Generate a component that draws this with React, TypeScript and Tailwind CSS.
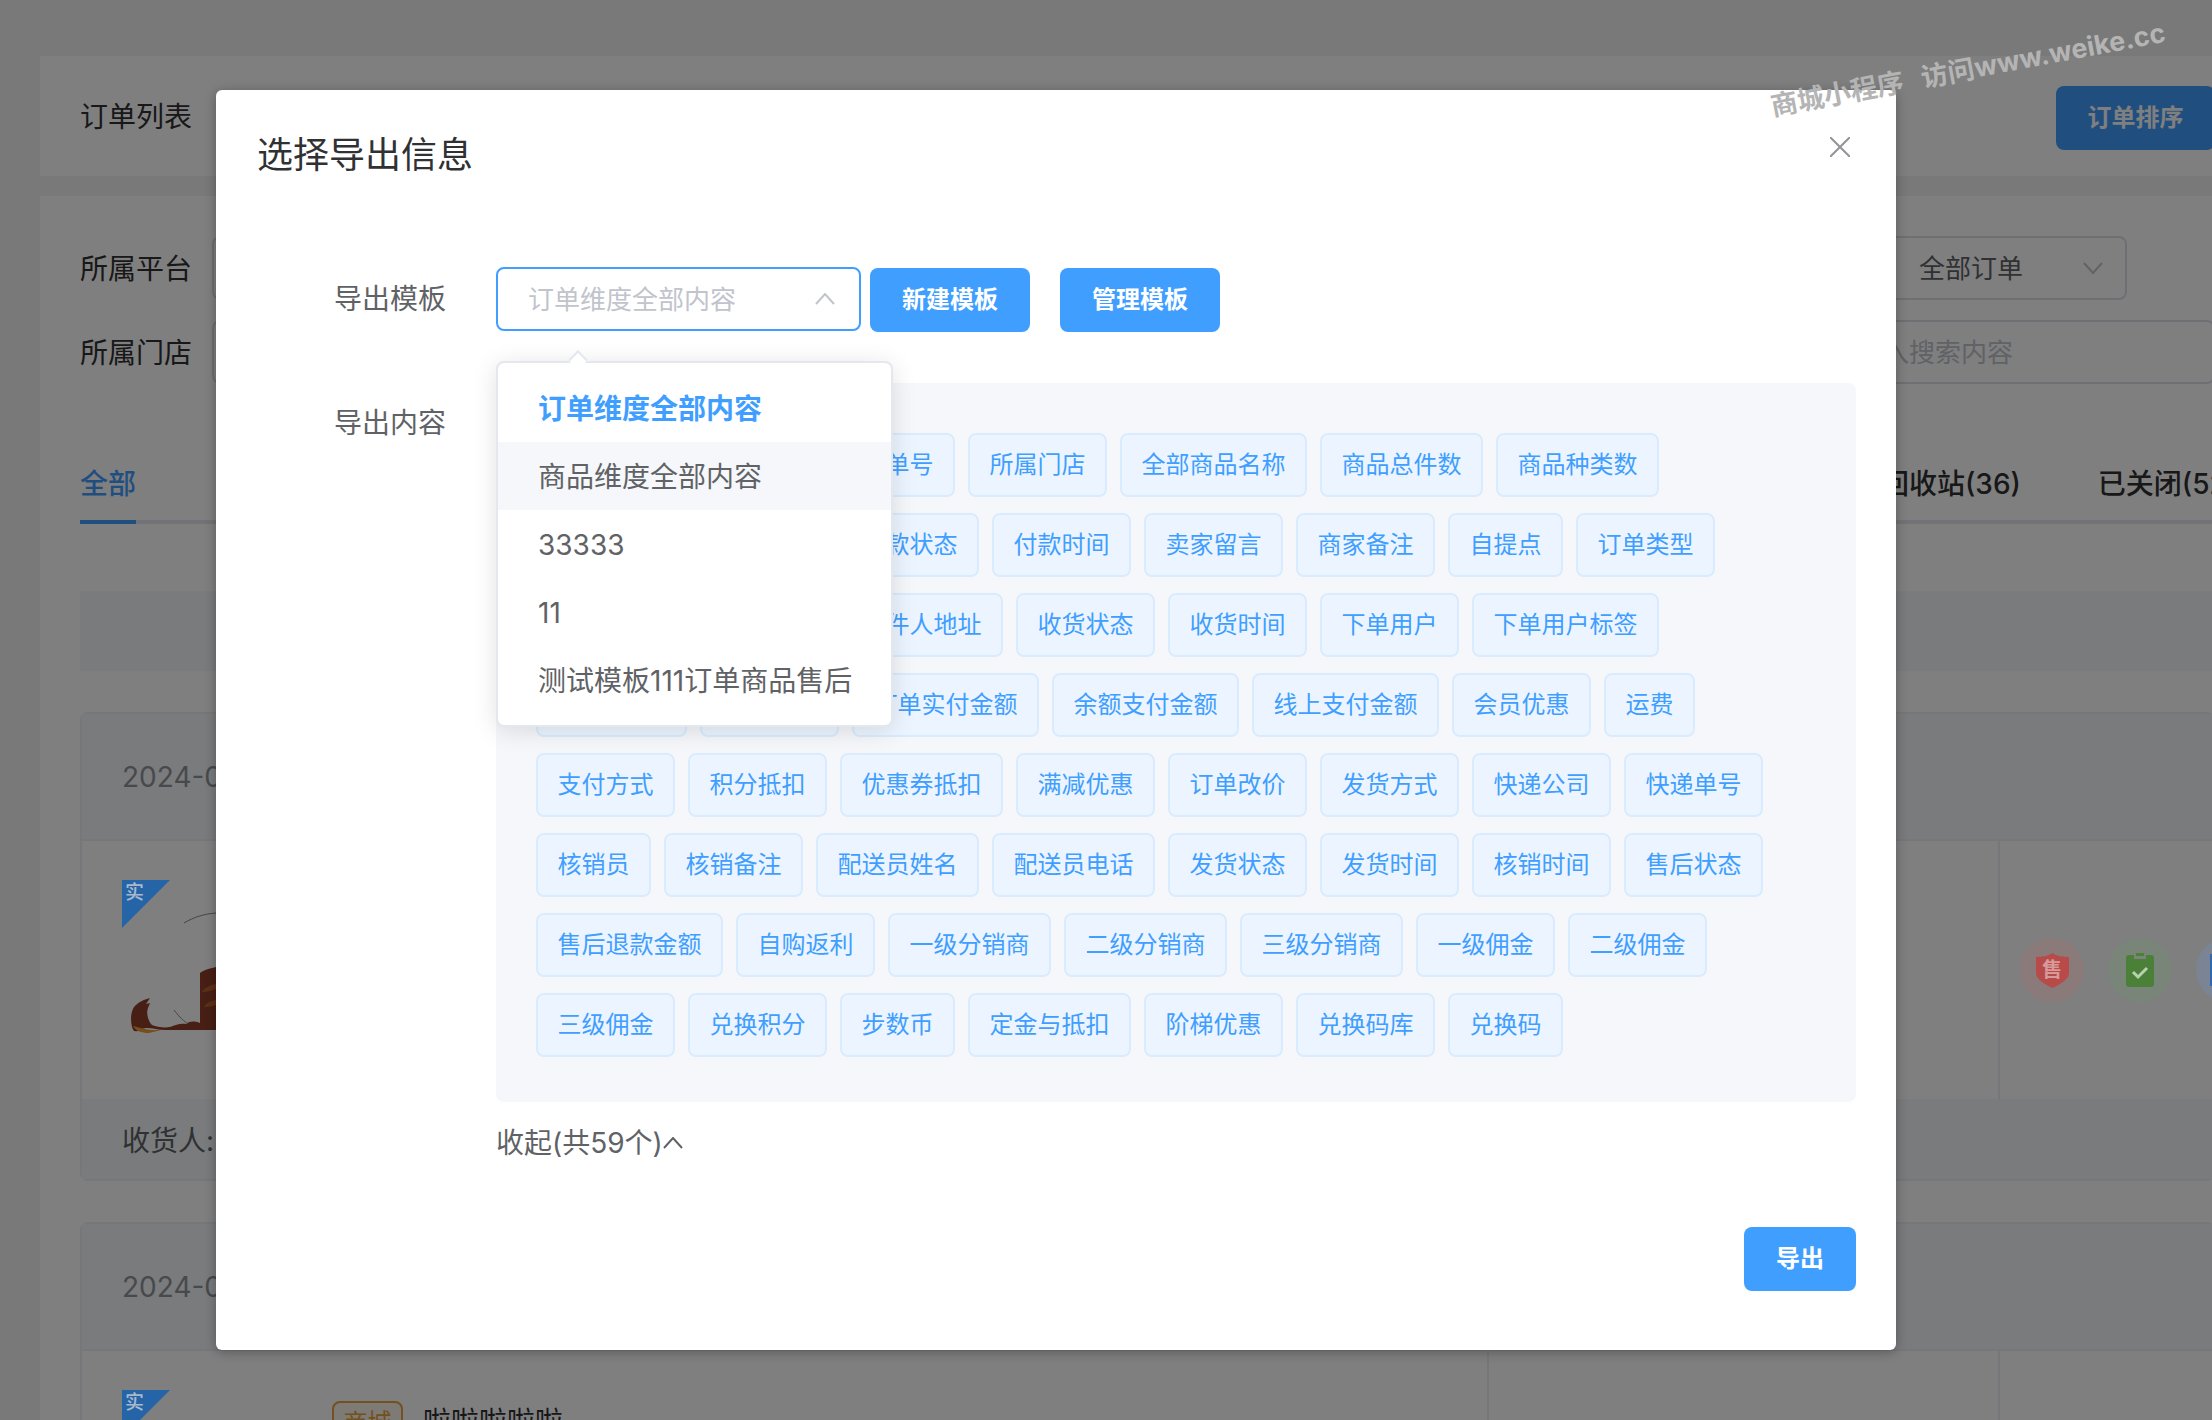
import { ReactNode } from 'react'

const tagRows = [
  ['所属平台', '订单状态', '订单号', '所属门店', '全部商品名称', '商品总件数', '商品种类数'],
  ['下单时间', '付款方式', '付款状态', '付款时间', '卖家留言', '商家备注', '自提点', '订单类型'],
  ['收货人名', '收货电话', '收件人地址', '收货状态', '收货时间', '下单用户', '下单用户标签'],
  ['商品总金额', '订单总额', '订单实付金额', '余额支付金额', '线上支付金额', '会员优惠', '运费'],
  ['支付方式', '积分抵扣', '优惠券抵扣', '满减优惠', '订单改价', '发货方式', '快递公司', '快递单号'],
  ['核销员', '核销备注', '配送员姓名', '配送员电话', '发货状态', '发货时间', '核销时间', '售后状态'],
  ['售后退款金额', '自购返利', '一级分销商', '二级分销商', '三级分销商', '一级佣金', '二级佣金'],
  ['三级佣金', '兑换积分', '步数币', '定金与抵扣', '阶梯优惠', '兑换码库', '兑换码'],
]

const templates = ['商品维度全部内容', '33333', '11', '测试模板111订单商品售后']

function Chevron({ down, color }: { down?: boolean; color: string }) {
  return (
    <svg width="20" height="12" viewBox="0 0 20 12" fill="none" stroke={color} strokeWidth="2" className="shrink-0">
      <path d={down ? 'M1 1l9 10 9-10' : 'M1 11l9-10 9 10'} />
    </svg>
  )
}

function BlueButton({ children, className }: { children: ReactNode; className?: string }) {
  return (
    <div className={`flex h-[64px] items-center justify-center rounded-[8px] bg-[#409eff] text-[24px] font-bold text-white ${className ?? ''}`}>
      {children}
    </div>
  )
}

// 角标和操作图标在遮罩上层，颜色直接写成遮罩后的效果
function CornerBadge() {
  return (
    <div className="absolute left-0 top-0 z-[11] h-[48px] w-[48px] bg-[#2664a8] pl-[3px] text-[19px] font-medium leading-[26px] text-[#a9b9cc] [clip-path:polygon(0_0,100%_0,0_100%)]">
      实
    </div>
  )
}

function GoodsImage({ tiger }: { tiger?: boolean }) {
  return (
    <div className="relative h-[190px] w-[190px] shrink-0">
      <CornerBadge />
      {tiger && (
        <svg width="190" height="190" viewBox="0 0 190 190">
          <path d="M78 93c3-3 12-5 16-6v63H40c-8-1-16-4-22 0-6 3-7 0-8-3-2-8-1-18 4-22 3-3 7-5 14-7l-4 6 4-1-2 5c-2 5 0 13 4 17 5 2 12 3 18 2 6-2 10-4 16-3 4-3 8-3 14-1V93z" fill="#8f3f28" />
          <path d="M11 146c8 2 20 6 32 3l-16 4c-8 0-13-2-16-7z" fill="#ef9a3c" />
          <path d="M94 104c-6 1-12 4-14 8 5 0 10-2 14-3zM94 120c-6 1-10 3-12 7 5 0 8-1 12-2z" fill="#b9612f" />
          <path d="M62 43c10-6 20-9 32-10M52 130c4 5 7 9 14 14" stroke="#8a8a8a" fill="none" />
        </svg>
      )}
    </div>
  )
}

function ActionCircle({ bg, children }: { bg: string; children: ReactNode }) {
  return (
    <div className={`relative z-[11] flex h-[64px] w-[64px] shrink-0 items-center justify-center rounded-full ${bg}`}>
      {children}
    </div>
  )
}

function OrderCard({ first }: { first?: boolean }) {
  return (
    <div className={`w-[2135px] rounded-[8px] border-2 border-[#ebeef5] ${first ? '' : 'mt-[41px]'}`}>
      <div className="flex h-[125px] items-center bg-[#f5f7fa] pl-[40px] text-[28px] text-[#909399]">2024-06-18 10:21:36</div>
      <div className="flex h-[260px] border-t-2 border-[#ebeef5]">
        <div className="flex w-[1405px] shrink-0 items-start pl-[40px] pt-[39px]">
          <GoodsImage tiger={first} />
          {!first && (
            <>
              <div className="ml-[20px] mt-[11px] flex h-[44px] w-[71px] items-center justify-center rounded-[8px] border-2 border-[#e6a23c] bg-[#fdf6ec] text-[24px] text-[#e6a23c]">商城</div>
              <div className="ml-[20px] mt-[11px] text-[28px] text-[#303133]">啦啦啦啦啦</div>
            </>
          )}
        </div>
        <div className="w-[511px] shrink-0 border-l-2 border-[#ebeef5]" />
        <div className="flex flex-1 items-center gap-[24px] border-l-2 border-[#ebeef5] pl-[20px]">
          {first && (
            <>
              <ActionCircle bg="bg-[#8a7a7a]">
                <div className="relative flex h-[35px] w-[33px] items-center justify-center">
                  <svg width="33" height="35" viewBox="0 0 33 35" className="absolute inset-0">
                    <path d="M16.500 0c4 3 10 4 16.500 4v16c0 6-8 11-16.500 15C8 31 0 26 0 20V4c6 0 12-1 16.500-4z" fill="#b84a4a" />
                  </svg>
                  <span className="relative text-[20px] font-bold leading-none text-[#d69a9a]">售</span>
                </div>
              </ActionCircle>
              <ActionCircle bg="bg-[#7a857a]">
                <svg width="28" height="34" viewBox="0 0 28 34">
                  <rect y="2" width="28" height="32" rx="3" fill="#4a8038" />
                  <rect x="8" y="0" width="12" height="6" rx="1" fill="#7a857a" />
                  <rect x="10" y="0" width="8" height="3" fill="#4a8038" />
                  <path d="M7 19l5 5 9-9" stroke="#b8d0ae" strokeWidth="3" fill="none" />
                </svg>
              </ActionCircle>
              <ActionCircle bg="bg-[#7b8494]">
                <div className="mr-[30px] h-[32px] w-[6px] bg-[#3068b0]" />
              </ActionCircle>
            </>
          )}
        </div>
      </div>
      <div className="flex h-[80px] items-center bg-[#f5f7fa] pl-[40px] pt-[4px] text-[28px] text-[#606266]">收货人: 张三</div>
    </div>
  )
}

function BackgroundPage() {
  return (
    <div className="flex flex-col pl-[40px] pt-[56px]">
      <div className="flex h-[120px] w-[2215px] items-center justify-between bg-white px-[40px] text-[28px] text-[#303133]">
        <span className="pt-[2px]">订单列表</span>
        <div className="mt-[4px] flex h-[64px] w-[159px] items-center justify-center rounded-[8px] bg-[#409eff] text-[24px] font-bold text-white">订单排序</div>
      </div>
      <div className="mt-[20px] flex w-[2215px] flex-col bg-white px-[40px] pt-[40px]">
        <div className="flex h-[64px] items-center text-[28px] text-[#303133]">
          <span className="w-[132px] shrink-0 pt-[2px]">所属平台</span>
          <div className="h-[64px] w-[300px] rounded-[8px] border-2 border-[#dcdfe6]" />
          <div className="ml-auto mr-[88px] flex h-[64px] w-[280px] items-center justify-between rounded-[8px] border-2 border-[#dcdfe6] pl-[70px] pr-[22px] text-[26px] text-[#606266]">
            <span>全部订单</span>
            <Chevron down color="#c0c4cc" />
          </div>
        </div>
        <div className="mt-[20px] flex h-[64px] items-center text-[28px] text-[#303133]">
          <span className="w-[132px] shrink-0 pt-[2px]">所属门店</span>
          <div className="h-[64px] w-[300px] rounded-[8px] border-2 border-[#dcdfe6]" />
          <div className="ml-auto flex h-[64px] w-[416px] items-center rounded-[8px] border-2 border-[#dcdfe6] pl-[30px] text-[26px] text-[#c0c4cc]">请输入搜索内容</div>
        </div>
        <div className="mt-[60px] flex h-[80px] items-center whitespace-nowrap border-b-4 border-[#e4e7ed] pt-[4px] text-[28px] font-medium text-[#303133]">
          <div className="relative flex h-[72px] w-[56px] shrink-0 items-center text-[#409eff]">
            全部
            <div className="absolute bottom-[-4px] left-0 h-[4px] w-full bg-[#409eff]" />
          </div>
          <span className="ml-[1745px] shrink-0">回收站(36)</span>
          <span className="ml-[77px] shrink-0">已关闭(52)</span>
        </div>
        <div className="mt-[67px] h-[80px] w-full shrink-0 bg-[#f5f7fa]" />
        <div className="mt-[41px] flex flex-col">
          <OrderCard first />
          <OrderCard />
        </div>
      </div>
    </div>
  )
}

function TemplateDropdown() {
  return (
    <div className="absolute left-0 top-[94px] z-10 w-[397px] rounded-[8px] border-2 border-[#e4e7ed] bg-white py-[11px] text-[28px] text-[#606266] shadow-[0_4px_24px_rgba(0,0,0,0.12)]">
      <div className="absolute left-[73px] top-[-10px] h-[14px] w-[14px] rotate-45 border-l-2 border-t-2 border-[#e4e7ed] bg-white" />
      <div className="flex h-[68px] items-center pl-[40px] pt-[2px] font-bold text-[#409eff]">订单维度全部内容</div>
      {templates.map((name, i) => (
        <div key={name} className={`flex h-[68px] items-center whitespace-nowrap pl-[40px] pt-[2px] ${i === 0 ? 'bg-[#f5f7fa]' : ''}`}>
          {name}
        </div>
      ))}
    </div>
  )
}

function ExportDialog() {
  return (
    <div className="absolute left-[216px] top-[90px] z-20 flex h-[1260px] w-[1680px] flex-col rounded-[6px] bg-white pl-[41px] pr-[40px] pt-[41px] shadow-[0_2px_12px_rgba(0,0,0,0.3)]">
      <div className="text-[36px] leading-[48px] text-[#303133]">选择导出信息</div>
      <svg width="20" height="20" viewBox="0 0 20 20" stroke="#909399" strokeWidth="2" className="absolute right-[46px] top-[47px]">
        <path d="M0 0l20 20M20 0L0 20" />
      </svg>

      {/* 导出模板 */}
      <div className="ml-[77px] mt-[88px] flex">
        <div className="h-[64px] w-[112px] shrink-0 text-[28px] leading-[64px] text-[#606266]">导出模板</div>
        <div className="relative ml-[50px] w-[365px] shrink-0">
          <div className="flex h-[64px] items-center justify-between rounded-[8px] border-2 border-[#409eff] pl-[30px] pr-[24px] text-[26px] text-[#c0c4cc]">
            <span className="pt-[1px]">订单维度全部内容</span>
            <Chevron color="#c0c4cc" />
          </div>
          <TemplateDropdown />
        </div>
        <BlueButton className="ml-[9px] mt-[1px] w-[160px]">新建模板</BlueButton>
        <BlueButton className="ml-[30px] mt-[1px] w-[160px]">管理模板</BlueButton>
      </div>

      {/* 导出内容 */}
      <div className="ml-[77px] mt-[51px] flex">
        <div className="w-[112px] shrink-0 pt-[8px] text-[28px] leading-[64px] text-[#606266]">导出内容</div>
        <div className="ml-[50px] flex flex-1 flex-col">
          <div className="flex flex-col gap-[16px] rounded-[8px] bg-[#f5f7fa] pb-[45px] pl-[40px] pt-[50px]">
            {tagRows.map((row, i) => (
              <div key={i} className="flex gap-[13px]">
                {row.map((tag, j) => (
                  <div
                    key={tag}
                    className={`flex h-[64px] items-center whitespace-nowrap rounded-[8px] border-2 border-[#d9ecff] bg-[#ecf5ff] text-[24px] text-[#409eff] ${i === 3 && j === 0 ? 'w-[151px] justify-center' : 'px-[19.5px]'}`}
                  >
                    {tag}
                  </div>
                ))}
              </div>
            ))}
          </div>
          <div className="mt-[20px] flex items-center text-[28px] leading-[40px] text-[#606266]">
            <span className="pt-[1px]">收起(共59个)</span>
            <Chevron color="#606266" />
          </div>
          <div className="mt-[64px] flex justify-end">
            <BlueButton className="w-[112px]">导出</BlueButton>
          </div>
        </div>
      </div>
    </div>
  )
}

export default function App() {
  return (
    <div className="relative h-[1420px] w-[2212px] overflow-hidden bg-[#f2f2f2] [font-family:'Inter','Noto_Sans_CJK_SC',sans-serif]">
      <BackgroundPage />
      <div className="absolute inset-0 z-10 bg-black/50" />
      <ExportDialog />
      {/* 水印 */}
      <div className="absolute left-[1768px] top-[52px] z-30 flex w-[400px] rotate-[-10.7deg] items-center justify-center whitespace-nowrap text-[27px] font-bold leading-[36px] text-[#b4b4b4]">
        <span>商城小程序</span>
        <span className="ml-[18px]">访问</span>
        <span>www.weike.cc</span>
      </div>
    </div>
  )
}
